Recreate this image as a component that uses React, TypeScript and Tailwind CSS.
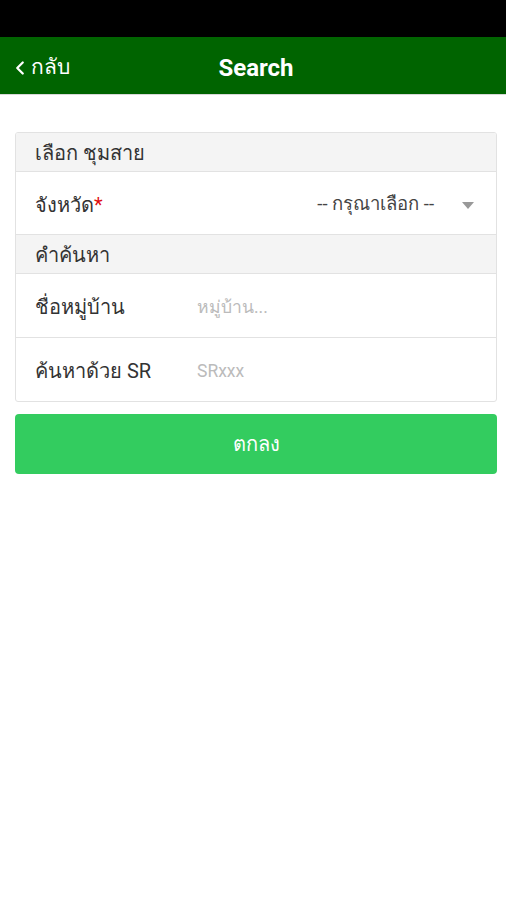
import { ChevronLeft } from 'lucide-react';

function SectionHeader({ label }: { label: string }) {
  return (
    <div className="h-[39px] flex items-center px-[19px] pt-[2px] bg-[#f4f4f4] border-b border-[#e2e2e2] text-[20px] text-[#333]">
      {label}
    </div>
  );
}

export default function App() {
  return (
    <div
      className="w-[506px] h-[900px] bg-white flex flex-col"
      style={{ fontFamily: 'Roboto, "Noto Sans", "DejaVu Sans", sans-serif' }}
    >
      {/* status bar */}
      <div className="h-[37px] bg-black" />

      {/* header */}
      <header className="h-[58px] bg-[#006400] border-b border-[#d8d8d8] flex items-center relative pt-[4px]">
        <button className="flex items-center pl-[9px] text-white text-[21px]">
          <ChevronLeft className="w-[22px] h-[22px]" strokeWidth={2.5} />
          <span>กลับ</span>
        </button>
        <h1 className="absolute left-0 right-0 pl-[6px] text-center text-white text-[24px] font-bold pointer-events-none">
          Search
        </h1>
      </header>

      <main className="pl-[15px] pr-[9px] pt-[37px]">
        <div className="border border-[#e2e2e2] rounded-[3px] overflow-hidden">
          <SectionHeader label="เลือก ชุมสาย" />
          <div className="h-[63px] flex items-center px-[19px] pt-[4px] border-b border-[#e2e2e2] text-[20px] text-[#333]">
            <span>
              จังหวัด<span className="text-[#e01010]">*</span>
            </span>
            <span className="ml-auto text-[#444] text-[18.5px]">-- กรุณาเลือก --</span>
            <svg width="12" height="7" viewBox="0 0 12 7" className="ml-[28px] mr-[3px]">
              <path d="M0 0 L12 0 L6 7 Z" fill="#999" />
            </svg>
          </div>
          <SectionHeader label="คำค้นหา" />
          <div className="h-[64px] flex items-center px-[19px] pt-[3px] border-b border-[#e2e2e2] text-[20px] text-[#333]">
            <span className="w-[162px]">ชื่อหมู่บ้าน</span>
            <span className="text-[17.5px] text-[#bbb]">หมู่บ้าน...</span>
          </div>
          <div className="h-[63px] flex items-center px-[19px] pt-[3px] text-[20px] text-[#333]">
            <span className="w-[162px]">ค้นหาด้วย SR</span>
            <span className="text-[17.5px] text-[#bbb]">SRxxx</span>
          </div>
        </div>

        <button className="mt-[12px] w-full h-[60px] rounded-[4px] bg-[#33cc5f] text-white text-[20px] flex items-center justify-center">
          ตกลง
        </button>
      </main>
    </div>
  );
}
